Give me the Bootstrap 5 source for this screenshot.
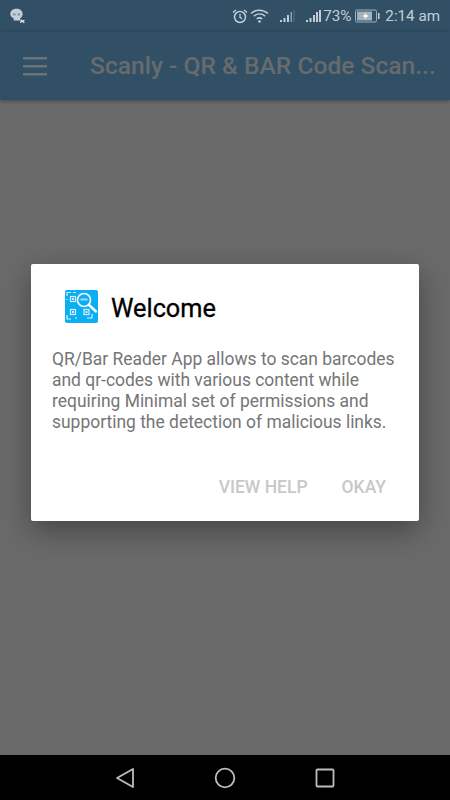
<!DOCTYPE html>
<html lang="en">
    <head>
        <meta charset="UTF-8">
        <title>Scanly</title>
        <link href="https://cdn.jsdelivr.net/npm/bootstrap@5.3.0/dist/css/bootstrap.min.css" rel="stylesheet">
        <style>
            html, body { height: 800px; overflow: hidden; }
            body { font-family: Roboto, "Liberation Sans", sans-serif; background: #6a6a6a; }
            .phone-wrap { width: 450px; height: 800px; }
            .status-strip { height: 32px; background: #315065; color: #c3ced6; font-size: 15.2px; padding: 0 10px 0 9px; }
            .status-time { margin-left: 5px; }
            .gap-wifi { margin-left: 1px; }
            .gap-sig1 { margin-left: 10px; }
            .gap-sig2 { margin-left: 10px; }
            .gap-pct { margin-left: 2px; }
            .gap-batt { margin-left: 4px; }
            .app-strip { height: 68px; background: #315065; color: #666b6e; padding: 0 14px 0 23px; box-shadow: 0 1px 4px rgba(0,0,0,.35); z-index: 1; }
            .app-title { font-size: 24.6px; font-weight: 500; margin-left: 43px; white-space: nowrap; }
            .backdrop-area { background: #6a6a6a; padding: 164px 31px 0 31px; }
            .welcome-box { height: 257px; background: #fff; border-radius: 2px; box-shadow: 0 10px 30px rgba(0,0,0,.35); }
            .welcome-head { padding: 26px 20px 0 34px; }
            .welcome-title { font-size: 25.3px; font-weight: 400; color: #000; margin: 2px 0 0 13px; line-height: 34px; -webkit-text-stroke: .3px #000; }
            .welcome-text { font-size: 17.45px; line-height: 20.9px; color: #757575; padding: 23px 20px 0 21px; margin: 0; }
            .welcome-actions { padding: 0 33px 24px 0; gap: 34px; }
            .welcome-btn { font-size: 17.5px; font-weight: 500; color: #c8c8c8; line-height: 20px; padding: 0; border: 0; background: none; }
            .nav-strip { height: 45px; background: #000; }
            .nav-slot { width: 100px; }
        </style>
    </head>
    <body>
        <div class="phone-wrap d-flex flex-column">
            <!-- Status bar -->
            <div class="status-strip d-flex align-items-center flex-shrink-0">
                <svg width="17" height="17" viewBox="0 0 16 16">
                    <path d="M7 .8c3.500 0 5.800 1.900 5.800 4.800 0 1.900-.9 3.200-2.200 3.800v2.300H4.400V9.600C2.400 8.900 1.200 7.400 1.200 5.600 1.200 2.800 3.600.8 7 .8z" fill="#c3ced6"/>
                    <circle cx="5" cy="6" r="1.400" fill="#8ea2ae"/>
                    <circle cx="9.300" cy="6" r="1.400" fill="#8ea2ae"/>
                    <path d="M10.500 13.500l4-2M11 11l3.500 3" stroke="#e6ecef" stroke-width="1.200"/>
                </svg>
                <div class="ms-auto d-flex align-items-center">
                    <svg width="18" height="18" viewBox="0 0 18 18" fill="none" stroke="#c3ced6">
                        <circle cx="9" cy="10" r="5.500" stroke-width="1.500"/>
                        <path d="M9 7v3.300l2 1.500" stroke-width="1.300"/>
                        <path d="M2 5.500L5 3M16 5.500L13 3" stroke-width="1.500"/>
                    </svg>
                    <svg class="gap-wifi" width="19" height="16" viewBox="0 0 19 16" fill="none" stroke="#c3ced6" stroke-width="1.500">
                        <path d="M1 5.500C6 1 13 1 18 5.500"/>
                        <path d="M3.800 8.300C7.200 5.300 11.800 5.300 15.200 8.300"/>
                        <path d="M6.700 11C8.300 9.700 10.700 9.700 12.300 11"/>
                        <circle cx="9.500" cy="13.500" r="1.300" fill="#c3ced6" stroke="none"/>
                    </svg>
                    <svg class="gap-sig1" width="16" height="14" viewBox="0 0 16 14">
                        <path d="M1 11h2v2H1zM4.500 9h2v4h-2zM8 6h2v7H8z" fill="#c3ced6"/>
                        <path d="M11.500 3h1.500v10h-1.500z" fill="#8ea2ae"/>
                        <path d="M14.500 1h1v12h-1z" fill="#56717f"/>
                    </svg>
                    <svg class="gap-sig2" width="16" height="14" viewBox="0 0 16 14">
                        <path d="M1 11h2v2H1zM4.500 9h2v4h-2zM8 6h2v7H8zM11 3h2v10h-2zM14 1h2v12h-2z" fill="#c3ced6"/>
                    </svg>
                    <span class="gap-pct">73%</span>
                    <svg class="gap-batt" width="25" height="14" viewBox="0 0 25 14">
                        <rect x=".5" y="1" width="21" height="12" rx="1.500" fill="none" stroke="#9fb0bb"/>
                        <rect x="2" y="2.500" width="15" height="9" fill="#a2b2bd"/>
                        <path d="M8 7h5M10.500 4.500v5" stroke="#fff" stroke-width="1.500"/>
                        <rect x="23" y="4" width="1.500" height="6" fill="#c3ced6"/>
                    </svg>
                    <span class="status-time">2:14 am</span>
                </div>
            </div>

            <!-- App bar -->
            <div class="app-strip d-flex align-items-center flex-shrink-0 position-relative">
                <svg width="24" height="19" viewBox="0 0 24 19" fill="#6b7378">
                    <rect y="0" width="24" height="2.500"/>
                    <rect y="8" width="24" height="2.500"/>
                    <rect y="16" width="24" height="2.500"/>
                </svg>
                <span class="app-title">Scanly - QR &amp; BAR Code Scan...</span>
            </div>

            <!-- Dialog -->
            <div class="backdrop-area flex-grow-1">
                <div class="welcome-box d-flex flex-column">
                    <div class="welcome-head d-flex align-items-start">
                        <svg width="33" height="33" viewBox="0 0 33 33" class="flex-shrink-0">
                            <rect width="33" height="33" rx="2" fill="#0aaef2"/>
                            <g fill="none" stroke="#d8f2fd" stroke-width="1.200">
                                <path d="M2 6V2.500h4M8 2.500h3M2 9v1"/>
                                <rect x="5.500" y="6.500" width="5" height="5"/>
                                <rect x="5.500" y="19.500" width="5" height="5"/>
                                <rect x="19" y="19.500" width="5" height="5"/>
                                <path d="M2 25v4h4M12 28h-2M27 24v4h-5"/>
                            </g>
                            <g fill="#d8f2fd">
                                <rect x="7" y="8" width="2" height="2"/>
                                <rect x="7" y="21" width="2" height="2"/>
                                <rect x="20.500" y="21" width="2" height="2"/>
                            </g>
                            <circle cx="19" cy="10" r="6.500" fill="#0aaef2" stroke="#fff" stroke-width="1.600"/>
                            <path d="M15.500 9.500h7" stroke="#9fdff9" stroke-width="2"/>
                            <path d="M24 15l7 6.500" stroke="#fff" stroke-width="2.400" stroke-linecap="round"/>
                        </svg>
                        <h5 class="welcome-title">Welcome</h5>
                    </div>
                    <p class="welcome-text">QR/Bar Reader App allows to scan barcodes and qr-codes with various content while requiring Minimal set of permissions and supporting the detection of malicious links.</p>
                    <div class="welcome-actions d-flex justify-content-end mt-auto">
                        <button type="button" class="welcome-btn">VIEW HELP</button>
                        <button type="button" class="welcome-btn">OKAY</button>
                    </div>
                </div>
            </div>

            <!-- Android nav -->
            <div class="nav-strip d-flex justify-content-center align-items-center flex-shrink-0">
                <div class="nav-slot d-flex justify-content-center">
                    <svg width="20" height="22" viewBox="0 0 20 22" fill="none" stroke="#bdbdbd" stroke-width="1.800" stroke-linejoin="round"><path d="M18 2v18L2 11z"/></svg>
                </div>
                <div class="nav-slot d-flex justify-content-center">
                    <svg width="22" height="22" viewBox="0 0 22 22" fill="none" stroke="#bdbdbd" stroke-width="1.800"><circle cx="11" cy="11" r="9.300"/></svg>
                </div>
                <div class="nav-slot d-flex justify-content-center">
                    <svg width="20" height="20" viewBox="0 0 20 20" fill="none" stroke="#bdbdbd" stroke-width="1.800" stroke-linejoin="round"><rect x="1.500" y="1.500" width="17" height="17" rx="1"/></svg>
                </div>
            </div>
        </div>
        <script src="https://cdn.jsdelivr.net/npm/bootstrap@5.3.0/dist/js/bootstrap.bundle.min.js"></script>
    </body>
</html>
